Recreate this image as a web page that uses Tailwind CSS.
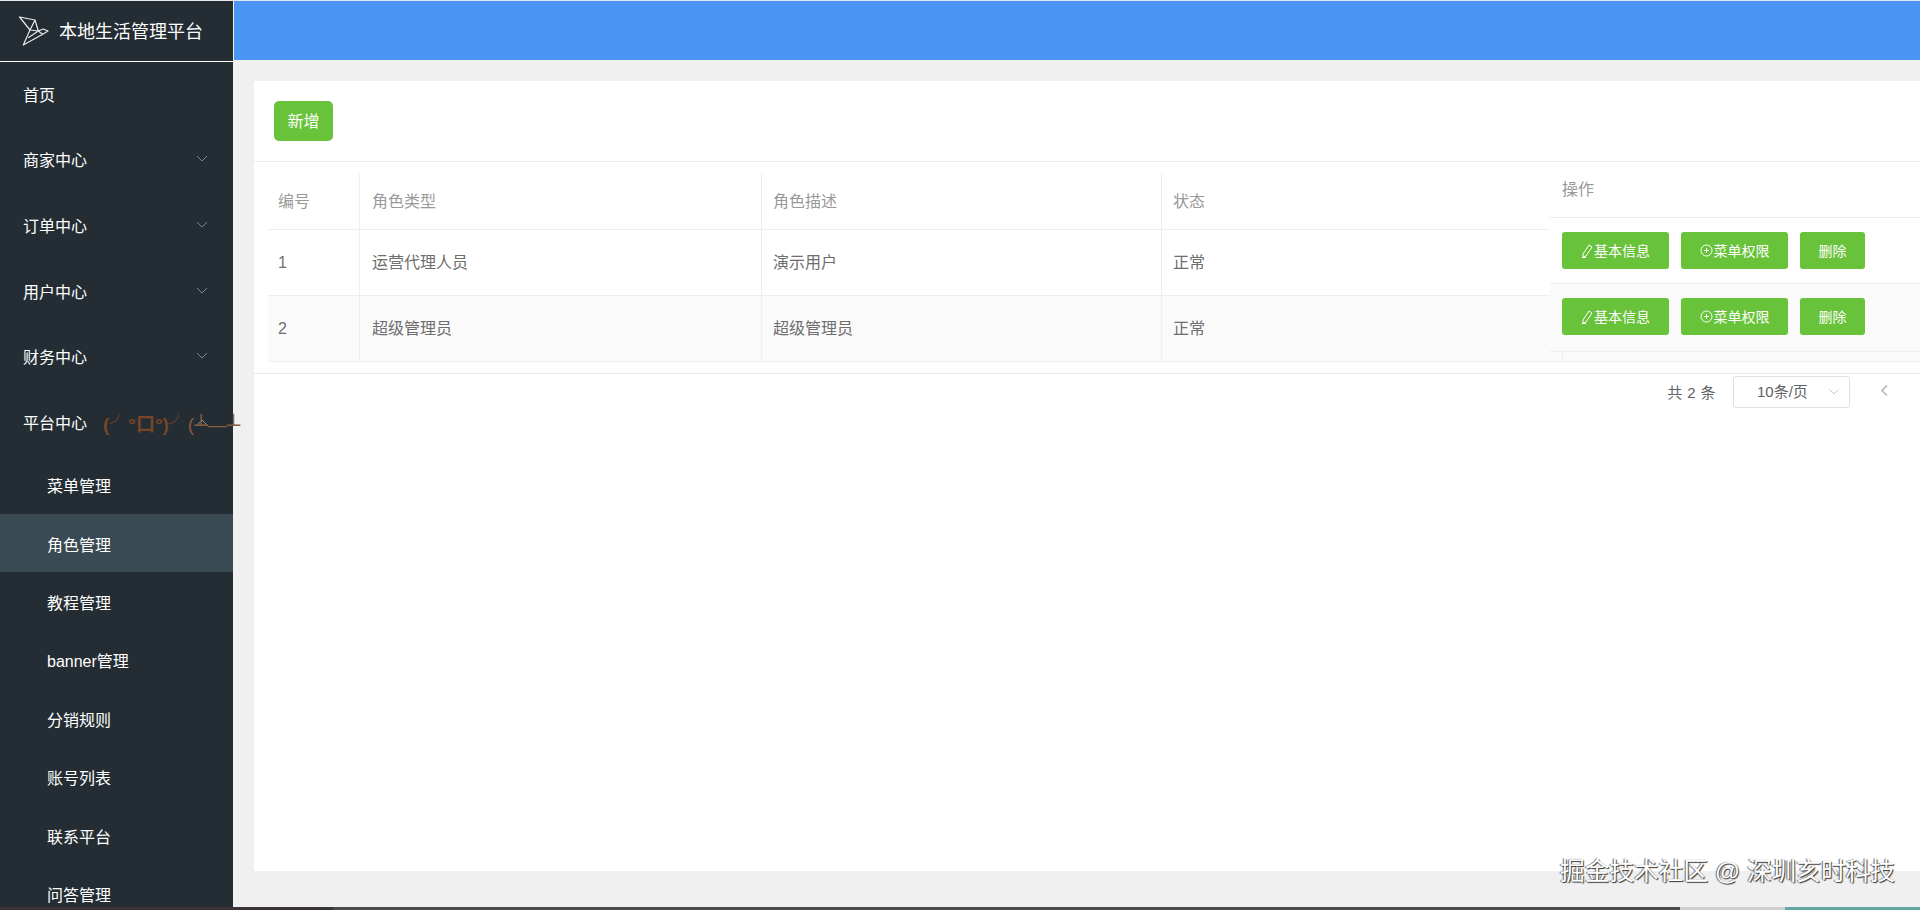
<!DOCTYPE html>
<html lang="en">
<head>
  <meta charset="UTF-8">
  <title>本地生活管理平台</title>
  <script src="https://cdn.jsdelivr.net/npm/@tailwindcss/browser@4"></script>
</head>
<body class="relative w-[1920px] h-[910px] overflow-hidden bg-[#f0f0f0] font-['Liberation_Sans','Noto_Sans_CJK_SC',sans-serif]">

  <div class="flex h-[907px]">
    <!-- Sidebar -->
    <aside class="w-[233px] shrink-0 bg-[#232d33] text-white text-base overflow-hidden">
      <div class="h-[62px] flex items-center gap-[10px] pl-[19px] border-t border-b border-t-[#e8e8e8] border-b-white">
        <svg class="w-[30px] h-[30px] shrink-0" viewBox="0 0 30 30" fill="none" stroke="#e8e8e8" stroke-width="1.2" stroke-linejoin="round">
          <path d="M0.5 1 L16 4 L19.3 15 L24.3 13 L29 15 L23.7 18.3 L4.3 29 L11 14 Z"/>
          <path d="M16 4 L11 14 L19.3 15 L23.7 18.3 M9.3 21.7 L19.3 15"/>
        </svg>
        <span class="text-lg mt-[2px]">本地生活管理平台</span>
      </div>

      <!-- Menu -->
      <nav>
        <a class="flex items-center justify-between h-[65.6px] pt-[2px] pl-[23px] pr-[25px]">首页</a>
        <a class="flex items-center justify-between h-[65.6px] pt-[2px] pl-[23px] pr-[25px]">商家中心
          <svg class="w-[12px] h-[8px] mb-1" viewBox="0 0 12 8" fill="none" stroke="#7d868b"><path d="M1 1 L6 6 L11 1"/></svg>
        </a>
        <a class="flex items-center justify-between h-[65.6px] pt-[2px] pl-[23px] pr-[25px]">订单中心
          <svg class="w-[12px] h-[8px] mb-1" viewBox="0 0 12 8" fill="none" stroke="#7d868b"><path d="M1 1 L6 6 L11 1"/></svg>
        </a>
        <a class="flex items-center justify-between h-[65.6px] pt-[2px] pl-[23px] pr-[25px]">用户中心
          <svg class="w-[12px] h-[8px] mb-1" viewBox="0 0 12 8" fill="none" stroke="#7d868b"><path d="M1 1 L6 6 L11 1"/></svg>
        </a>
        <a class="flex items-center justify-between h-[65.6px] pt-[2px] pl-[23px] pr-[25px]">财务中心
          <svg class="w-[12px] h-[8px] mb-1" viewBox="0 0 12 8" fill="none" stroke="#7d868b"><path d="M1 1 L6 6 L11 1"/></svg>
        </a>
        <a class="flex items-center justify-between h-[65.6px] pt-[2px] pl-[23px] pr-[25px]">平台中心
          <svg class="w-[12px] h-[8px] mb-1" viewBox="0 0 12 8" fill="none" stroke="#8d9498"><path d="M1 7 L6 2 L11 7"/></svg>
        </a>
        <a class="flex items-center h-[58.4px] pl-[47px] pt-[5px]">菜单管理</a>
        <a class="flex items-center h-[58.4px] pl-[47px] pt-[5px] bg-[#3a4a52]">角色管理</a>
        <a class="flex items-center h-[58.4px] pl-[47px] pt-[5px]">教程管理</a>
        <a class="flex items-center h-[58.4px] pl-[47px] pt-[5px]">banner管理</a>
        <a class="flex items-center h-[58.4px] pl-[47px] pt-[5px]">分销规则</a>
        <a class="flex items-center h-[58.4px] pl-[47px] pt-[5px]">账号列表</a>
        <a class="flex items-center h-[58.4px] pl-[47px] pt-[5px]">联系平台</a>
        <a class="flex items-center h-[58.4px] pl-[47px] pt-[5px]">问答管理</a>
      </nav>
    </aside>

    <!-- Main -->
    <main class="flex-1 min-w-0">
      <header class="h-[60px] ml-px bg-[#4a94f4] border-t border-[#dfe8f5]"></header>

      <div class="mt-[21px] ml-[21px] h-[790px] bg-white relative">
        <div class="h-[81px] pt-5 pl-5 border-b border-[#eceef0]">
          <button class="w-[59px] h-[40px] pt-[2px] rounded-[5px] bg-[#68c23a] text-white text-base">新增</button>
        </div>

        <!-- Table -->
        <div class="pl-[14px] pt-3 text-base text-[#6e6e6e]">
          <div class="grid grid-cols-[92px_402px_400px_1fr] h-[56px] items-center text-[#999] border-b border-[#ebeef5]">
            <div class="h-full flex items-center pl-[10px] border-r border-[#ebeef5]">编号</div>
            <div class="h-full flex items-center pl-3 border-r border-[#ebeef5]">角色类型</div>
            <div class="h-full flex items-center pl-[11px] border-r border-[#ebeef5]">角色描述</div>
            <div class="h-full flex items-center pl-[11px]">状态</div>
          </div>
          <div class="grid grid-cols-[92px_402px_400px_1fr] h-[66px] items-center border-b border-[#ebeef5]">
            <div class="h-full flex items-center pl-[10px] border-r border-[#ebeef5]">1</div>
            <div class="h-full flex items-center pl-3 border-r border-[#ebeef5]">运营代理人员</div>
            <div class="h-full flex items-center pl-[11px] border-r border-[#ebeef5]">演示用户</div>
            <div class="h-full flex items-center pl-[11px]">正常</div>
          </div>
          <div class="grid grid-cols-[92px_402px_400px_1fr] h-[66px] items-center bg-[#fafafa] border-b border-[#ebeef5]">
            <div class="h-full flex items-center pl-[10px] border-r border-[#ebeef5]">2</div>
            <div class="h-full flex items-center pl-3 border-r border-[#ebeef5]">超级管理员</div>
            <div class="h-full flex items-center pl-[11px] border-r border-[#ebeef5]">超级管理员</div>
            <div class="h-full flex items-center pl-[11px]">正常</div>
          </div>
        </div>

        <!-- Pagination -->
        <div class="mt-[11px] border-t border-[#e8e9eb] h-[40px] flex items-start justify-end text-[15px] text-[#606266]">
          <span class="mt-[8px] mr-[17px] tracking-[0.4px]">共 2 条</span>
          <div class="mt-[2px] w-[117px] h-[32px] border border-[#dcdfe6] rounded-[3px] flex items-center justify-between pl-[23px] pr-[10px]">
            <span>10条/页</span>
            <svg class="w-[10px] h-[6px]" viewBox="0 0 10 6" fill="none" stroke="#c0c4cc"><path d="M0.5 0.5 L5 5 L9.5 0.5"/></svg>
          </div>
          <svg class="mt-[11px] ml-[31px] mr-[32px] w-[7px] h-[11px]" viewBox="0 0 7 11" fill="none" stroke="#b4b8bf" stroke-width="1.6"><path d="M6 0.5 L1 5.5 L6 10.5"/></svg>
        </div>

        <!-- Fixed right column of the table -->
        <div class="absolute left-[1296px] top-[81px] right-0 h-[200px] text-base text-[#999]">
          <div class="h-[56px] bg-white border-b border-[#ebeef5] flex items-center pl-3">操作</div>
          <div class="h-[66px] bg-white border-b border-[#ebeef5] flex items-center gap-3 pl-3">
            <button class="w-[107px] h-[37px] rounded-[3px] bg-[#68c23a] text-white text-sm flex items-center justify-center">
              <svg class="w-[13px] h-[14px]" viewBox="0 0 13 14" fill="none" stroke="#fff" stroke-width="1"><path d="M8 1 L11 3 L5 12 L2 13 L2 10 Z M1 13.5 H5"/></svg>基本信息
            </button>
            <button class="w-[107px] h-[37px] rounded-[3px] bg-[#68c23a] text-white text-sm flex items-center justify-center gap-px">
              <svg class="w-[13px] h-[13px]" viewBox="0 0 13 13" fill="none" stroke="#fff" stroke-width="1"><circle cx="6.5" cy="6.5" r="5.5"/><path d="M6.5 4 V9 M4 6.5 H9"/></svg>菜单权限
            </button>
            <button class="w-[65px] h-[37px] rounded-[3px] bg-[#68c23a] text-white text-sm">删除</button>
          </div>
          <div class="h-[68px] pb-[2px] bg-[#fafafa] border-b border-[#ebeef5] flex items-center gap-3 pl-3">
            <button class="w-[107px] h-[37px] rounded-[3px] bg-[#68c23a] text-white text-sm flex items-center justify-center">
              <svg class="w-[13px] h-[14px]" viewBox="0 0 13 14" fill="none" stroke="#fff" stroke-width="1"><path d="M8 1 L11 3 L5 12 L2 13 L2 10 Z M1 13.5 H5"/></svg>基本信息
            </button>
            <button class="w-[107px] h-[37px] rounded-[3px] bg-[#68c23a] text-white text-sm flex items-center justify-center gap-px">
              <svg class="w-[13px] h-[13px]" viewBox="0 0 13 13" fill="none" stroke="#fff" stroke-width="1"><circle cx="6.5" cy="6.5" r="5.5"/><path d="M6.5 4 V9 M4 6.5 H9"/></svg>菜单权限
            </button>
            <button class="w-[65px] h-[37px] rounded-[3px] bg-[#68c23a] text-white text-sm">删除</button>
          </div>
          <div class="h-[9px] bg-[#fafafa] pl-3"><div class="h-full border-l border-[#ebeef5]"></div></div>
        </div>
      </div>
    </main>
  </div>

  <!-- Bottom strip: edge of the window behind -->
  <div class="flex h-[3px]">
    <div class="w-[333px] bg-[#3b3436]"></div>
    <div class="flex-1 bg-[#4a4a4a]"></div>
    <div class="w-[105px] bg-[#cfcfcf]"></div>
    <div class="w-[135px] bg-[#5fa8a0]"></div>
  </div>

  <!-- Danmaku over the sidebar -->
  <div class="absolute left-[103px] top-[411px] whitespace-nowrap text-[19px] font-bold text-[#7a4526] leading-7">(╯°口°)╯<span class="font-normal text-[#8a5a3c]">(┴—┴</span></div>

  <!-- Watermark -->
  <div class="absolute left-[1560px] top-[853px] whitespace-nowrap text-[24.7px] text-white [text-shadow:1px_1px_1px_#333,-1px_0_1px_#666]">掘金技术社区 @ 深圳亥时科技</div>

</body>
</html>
